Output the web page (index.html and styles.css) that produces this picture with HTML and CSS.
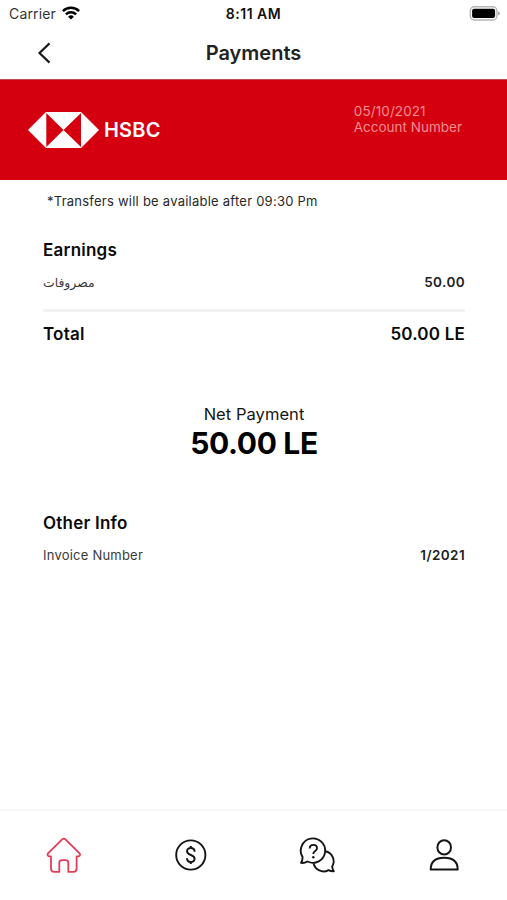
FILE: index.html
```html
<!DOCTYPE html>
<html lang="en">
<head>
<meta charset="utf-8">
<title>Payments</title>
<link rel="stylesheet" href="styles.css">
</head>
<body>
<div class="screen">
  <div class="status">
    <div class="carrier"><span>Carrier</span>
      <svg class="wifi" width="18" height="14" viewBox="0 0 18 14"><g fill="none" stroke="#000" stroke-width="2.5"><path d="M.9 5.1a11.5 11.5 0 0 1 16.2 0"/><path d="M3.9 8.3a7.2 7.2 0 0 1 10.2 0"/></g><path d="M9 13.6 6.1 10.7a4.1 4.1 0 0 1 5.8 0z"/></svg>
    </div>
    <span class="time">8:11 AM</span>
    <svg class="battery" width="32" height="15" viewBox="0 0 32 15"><rect x="1.300" y=".8" width="26.600" height="13.200" rx="4" fill="#fff" stroke="#b5b5b5" stroke-width="1.4"/><rect x="3.100" y="2.700" width="23" height="9.400" rx="2"/><path d="M29 5.200q2 .7 2 2.200t-2 2.200z" fill="#aaa"/></svg>
  </div>
  <header class="header">
    <svg class="back" width="14" height="22" viewBox="0 0 14 22"><path d="M12.500 1.400 2.500 11l10 9.600" fill="none" stroke="#1c1c1e" stroke-width="2.2"/></svg>
    <h1 class="title">Payments</h1>
  </header>
  <section class="banner">
    <div class="brand">
      <svg width="71" height="36" viewBox="0 0 71 36"><path fill="#fff" d="M0 18 18 0h35l18 18-18 18H18z"/><path fill="#d40010" d="M18.300 1v34L35.500 18zM53 1v34L35.500 18z"/></svg>
      <span class="brand-name">HSBC</span>
    </div>
    <div class="account"><div class="date">05/10/2021</div><div class="number">Account Number</div></div>
  </section>
  <p class="note">*Transfers will be available after 09:30 Pm</p>
  <main class="content">
    <h2 class="heading earnings">Earnings</h2>
    <div class="row item"><span class="arabic" lang="ar" dir="rtl">مصروفات</span><b class="amount">50.00</b></div>
    <div class="row total"><span class="total-label">Total</span><span class="total-value">50.00 LE</span></div>
    <div class="net"><div class="net-label">Net Payment</div><div class="net-value">50.00 LE</div></div>
    <h2 class="heading other">Other Info</h2>
    <div class="row item"><span class="invoice">Invoice Number</span><b class="amount">1/2021</b></div>
  </main>
  <nav class="tabs">
    <svg class="tab" width="40" height="40" viewBox="-.8 -.1 40 40"><path d="M18.600 4.100q1.400-1.200 2.800 0l14.400 14.200q1 1.300.1 2.300-.6.6-1.700.6h-1.400v12.200q0 3.400-3.300 3.400h-5.000v-9.200q0-2.600-2.600-2.600h-3.800q-2.600 0-2.600 2.600v9.200H10.500q-3.300 0-3.300-3.400V21.200H5.800q-1.100 0-1.700-.6-.9-1 .1-2.300z" fill="none" stroke="#e43c57" stroke-width="1.8" stroke-linejoin="round"/></svg>
    <svg class="tab" width="40" height="40" viewBox="0 0 40 40"><g fill="none" stroke="#151515" stroke-width="1.9"><circle cx="20.800" cy="20" r="14.600"/><path d="M24.600 16.700c0-5-7.600-5-7.600-.4 0 4.400 7.600 3 7.600 7.400s-7.600 4.700-7.600-.4M20.800 11v2.300M20.800 26.700v2.400" stroke-width="2"/></g></svg>
    <svg class="tab" width="40" height="40" viewBox="0 0 40 40"><g fill="none" stroke="#151515" stroke-width="1.9" stroke-linejoin="round"><path d="M5.600 22A12.200 12.200 0 1 1 10.500 26.500Q7.700 28.200 4 27.900Q5.600 25.800 5.600 22z"/><path d="M28.400 16.300A10.200 10.200 0 0 1 35.200 31.500Q35.300 34.500 36.800 36.200Q34 36.400 31.600 35.100A10.200 10.200 0 0 1 16.600 28.200"/><path d="M12.700 13.500c0-4.900 7.300-4.700 7.300-.2 0 3-3.700 2.600-3.700 5.800"/></g><circle cx="16.300" cy="22.200" r="1.200" fill="#151515"/></svg>
    <svg class="tab" width="40" height="40" viewBox="0 0 40 40"><g fill="none" stroke="#151515" stroke-width="2"><ellipse cx="20.200" cy="12.400" rx="6.800" ry="7.200"/><path d="M6.700 34.500c0-8.300 4.500-11.700 13.500-11.700s13.500 3.400 13.500 11.700z" stroke-linejoin="round"/></g></svg>
  </nav>
</div>
</body>
</html>
```
FILE: styles.css
```css
* { box-sizing: border-box; }
body { margin: 0; background: #fff; font-family: Inter, "Noto Sans", sans-serif; color: #111; }
h1, h2, p { margin: 0; }
svg { display: block; flex: none; }
.screen { width: 507px; height: 900px; display: flex; flex-direction: column; overflow: hidden; white-space: nowrap; }
.status { height: 28px; display: grid; grid-template-columns: 1fr auto 1fr; align-items: center; padding: 0 6px 0 9px; font-size: 14px; }
.carrier { display: flex; align-items: center; gap: 6px; color: #333; letter-spacing: .15px; margin-top: -1px; }
.wifi { margin-top: -1px; }
.time { font-weight: 600; font-size: 14px; letter-spacing: .5px; margin: -1px 3px 0 0; }
.battery { justify-self: end; margin-top: -2px; }
.header { height: 51px; display: grid; grid-template-columns: 1fr auto 1fr; align-items: center; padding: 0 37px; }
.back { margin-top: -2px; }
.title { grid-column: 2; font-size: 20px; line-height: 24px; font-weight: 600; color: #222; margin-top: -2px; }
.banner { height: 101px; background: #d40010; border-top: 1px solid #c54b58; display: flex; justify-content: space-between; padding: 0 45px 0 28px; }
.brand { display: flex; align-items: center; gap: 5px; }
.brand-name { color: #fff; font-size: 20px; font-weight: 600; letter-spacing: .2px; }
.account { padding-top: 23px; font-size: 13.5px; line-height: 16px; color: #f58e90; }
.date { letter-spacing: .1px; }
.note { padding-left: 47px; height: 61px; padding-top: 13px; font-size: 13px; line-height: 16px; letter-spacing: .24px; color: #292929; }
.content { padding: 0 42px 0 43px; flex: 1; }
.heading { font-size: 17px; line-height: 20px; font-weight: 600; letter-spacing: .23px; color: #0a0a0a; }
.earnings { margin-top: -1px; }
.row { display: flex; align-items: center; justify-content: space-between; }
.item { height: 20px; margin-top: 12px; font-size: 13px; line-height: 20px; letter-spacing: .22px; color: #3a3a3a; }
.amount { font-weight: 600; color: #222; font-size: 13.5px; letter-spacing: .4px; }
.arabic { font-family: "DejaVu Sans", sans-serif; font-size: 12.4px; letter-spacing: 0; margin-top: 2px; }
.total { margin-top: 17px; border-top: 3px solid #f1f1f1; padding-top: 11px; font-size: 17px; line-height: 22px; font-weight: 600; letter-spacing: .2px; color: #0a0a0a; }
.net { margin-top: 59px; text-align: center; color: #151515; }
.net-label { font-size: 16.5px; line-height: 20px; letter-spacing: .05px; }
.net-value { font-size: 30px; line-height: 38px; font-weight: 700; letter-spacing: -.35px; color: #000; }
.other { margin-top: 51px; }
.tabs { height: 91px; border-top: 2px solid #f5f5f5; display: grid; grid-template-columns: repeat(4, 1fr); justify-items: center; padding-top: 24px; }
```
